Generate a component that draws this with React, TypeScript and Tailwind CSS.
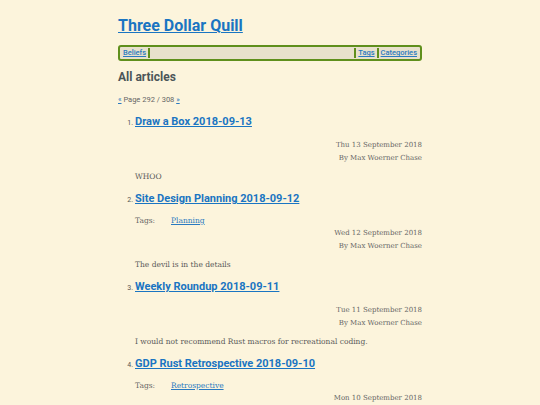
const heading = "font-['Roboto',sans-serif]"
const body = "font-['DejaVu_Serif',serif]"

type Article = {
  title: string
  tags?: string[]
  date: string
  summary: string
}

const articles: Article[] = [
  { title: 'Draw a Box 2018-09-13', date: 'Thu 13 September 2018', summary: 'WHOO' },
  { title: 'Site Design Planning 2018-09-12', tags: ['Planning'], date: 'Wed 12 September 2018', summary: 'The devil is in the details' },
  { title: 'Weekly Roundup 2018-09-11', date: 'Tue 11 September 2018', summary: 'I would not recommend Rust macros for recreational coding.' },
  { title: 'GDP Rust Retrospective 2018-09-10', tags: ['Retrospective'], date: 'Mon 10 September 2018', summary: '' },
]

function ArticleItem({ article, index }: { article: Article, index: number }) {
  return (
    <li className="flex">
      <span className={`w-[17px] shrink-0 text-right pr-[2px] text-[7px] leading-[16px] pt-[1px] text-[#555] ${ heading }`}>{ index }.</span>
      <div className="flex-1">
        <h2 className={`${ heading } font-bold text-[11px] leading-[16px]`}>
          <a href="#" className="text-[#1a75c2] underline">{ article.title }</a>
        </h2>
        { article.tags && (
          <div className={`${ body } flex text-[7.5px] leading-[12px] mt-[8px] text-[#666]`}>
            <span className="w-[36px]">Tags:</span>
            { article.tags.map(t => <a key={ t } href="#" className="text-[#2a7ac0] underline">{ t }</a>) }
          </div>
        ) }
        <div className={`${ body } text-right text-[7px] leading-[12.5px] text-[#666] ${ article.tags ? 'mt-[0px]' : 'mt-[9px]' }`}>
          <div>{ article.date }</div>
          <div>By Max Woerner Chase</div>
        </div>
        { article.summary && (
          <p className={`${ body } text-[7.5px] leading-[12px] text-[#5a5a5a] mt-[7px] mb-[8px]`}>{ article.summary }</p>
        ) }
      </div>
    </li>
  )
}

export default function App() {
  return (
    <div className="min-h-[405px] bg-[#fcf4dc]">
      <div className="w-[304px] mx-auto pt-[14px]">
        <h1 className={`${ heading } font-bold text-[16px] leading-[24px]`}>
          <a href="#" className="text-[#1a75c2] underline">Three Dollar Quill</a>
        </h1>
        <nav className={`${ heading } mt-[7px] flex h-[16px] items-center border-2 border-[#5f8f1c] rounded-[3px] bg-[#e8e1cc] text-[7.5px] font-medium px-[1px]`}>
          <a href="#" className="text-[#2a7ac0] underline px-[2px]">Beliefs</a>
          <span className="w-[2px] h-[10px] bg-[#5f8f1c]"></span>
          <span className="flex-1"></span>
          <span className="w-[2px] h-[10px] bg-[#5f8f1c]"></span>
          <a href="#" className="text-[#2a7ac0] underline px-[2px]">Tags</a>
          <span className="w-[2px] h-[10px] bg-[#5f8f1c]"></span>
          <a href="#" className="text-[#2a7ac0] underline px-[2px]">Categories</a>
        </nav>
        <h2 className={`${ heading } font-bold text-[12px] leading-[16px] text-[#4b5558] mt-[8px]`}>All articles</h2>
        <p className={`${ heading } text-[7.5px] leading-[10px] text-[#666] mt-[10px]`}>
          <a href="#" className="text-[#2a7ac0] underline">«</a> Page 292 / 308 <a href="#" className="text-[#2a7ac0] underline">»</a>
        </p>
        <ol className="mt-[9px]">
          { articles.map((a, i) => <ArticleItem key={ a.title } article={ a } index={ i + 1 } />) }
        </ol>
      </div>
    </div>
  )
}
